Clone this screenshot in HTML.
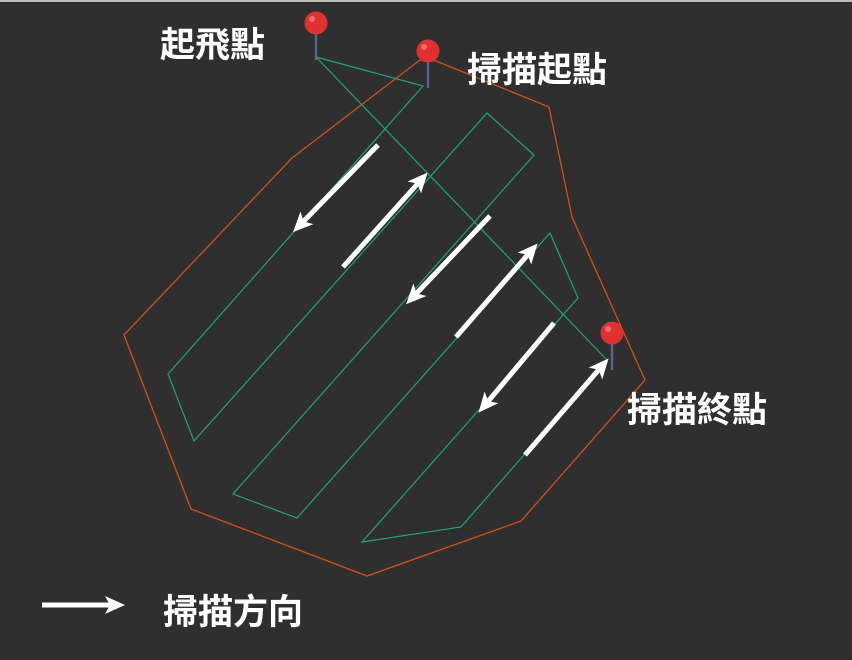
<!DOCTYPE html>
<html><head><meta charset="utf-8"><style>
html,body{margin:0;padding:0;background:#2f2f2f;}
svg{display:block}
text{font-family:"Liberation Sans","Noto Sans CJK TC",sans-serif;font-weight:bold;fill:#fff;font-size:35px}
</style></head><body>
<svg width="852" height="660" viewBox="0 0 852 660">
<rect width="852" height="660" fill="#2f2f2f"/>
<rect width="852" height="2" fill="#bdbdbd"/>
<defs><marker id="ah" markerWidth="4" markerHeight="4" refX="2" refY="2" orient="auto" markerUnits="strokeWidth"><path d="M0,0.2 L4,2 L0,3.8 L1,2 Z" fill="#fff"/></marker></defs>
<polygon points="124,335 292,158 420,60 436,61 549,107 572,217 645,380 521,521 367,576 191,509" fill="none" stroke="#d0501a" stroke-width="1.3"/>
<polyline points="316,57 423,86 168,374 194,441 487,113 534,155 233,494 297,518 550,233 578,298 362,542 461,527 607,360 316,57" fill="none" stroke="#1fa56e" stroke-width="1.2"/>
<g stroke="#fff" stroke-width="5" marker-end="url(#ah)">
<line x1="378" y1="145" x2="300" y2="225"/>
<line x1="343" y1="267" x2="421" y2="180"/>
<line x1="490" y1="216" x2="413" y2="297"/>
<line x1="456" y1="337" x2="531" y2="251"/>
<line x1="554" y1="323" x2="485" y2="405"/>
<line x1="525" y1="455" x2="602" y2="366"/>
<line x1="42" y1="605" x2="115" y2="605"/>
</g>
<g stroke="#5b6388" stroke-width="2.5">
<line x1="316" y1="30" x2="316" y2="60"/><line x1="428" y1="58" x2="428" y2="88"/><line x1="612" y1="340" x2="612" y2="370"/>
</g>
<g fill="#e03131">
<circle cx="316" cy="23" r="11.5"/><circle cx="428" cy="51" r="11.5"/><circle cx="612" cy="333" r="11.5"/>
</g>
<g fill="#f36b6b"><circle cx="312" cy="19" r="3"/><circle cx="424" cy="47" r="3"/><circle cx="608" cy="329" r="3"/></g>
<text x="160" y="57">起飛點</text>
<text x="467" y="82">掃描起點</text>
<text x="627" y="422">掃描終點</text>
<text x="163" y="624">掃描方向</text>
</svg>
</body></html>
